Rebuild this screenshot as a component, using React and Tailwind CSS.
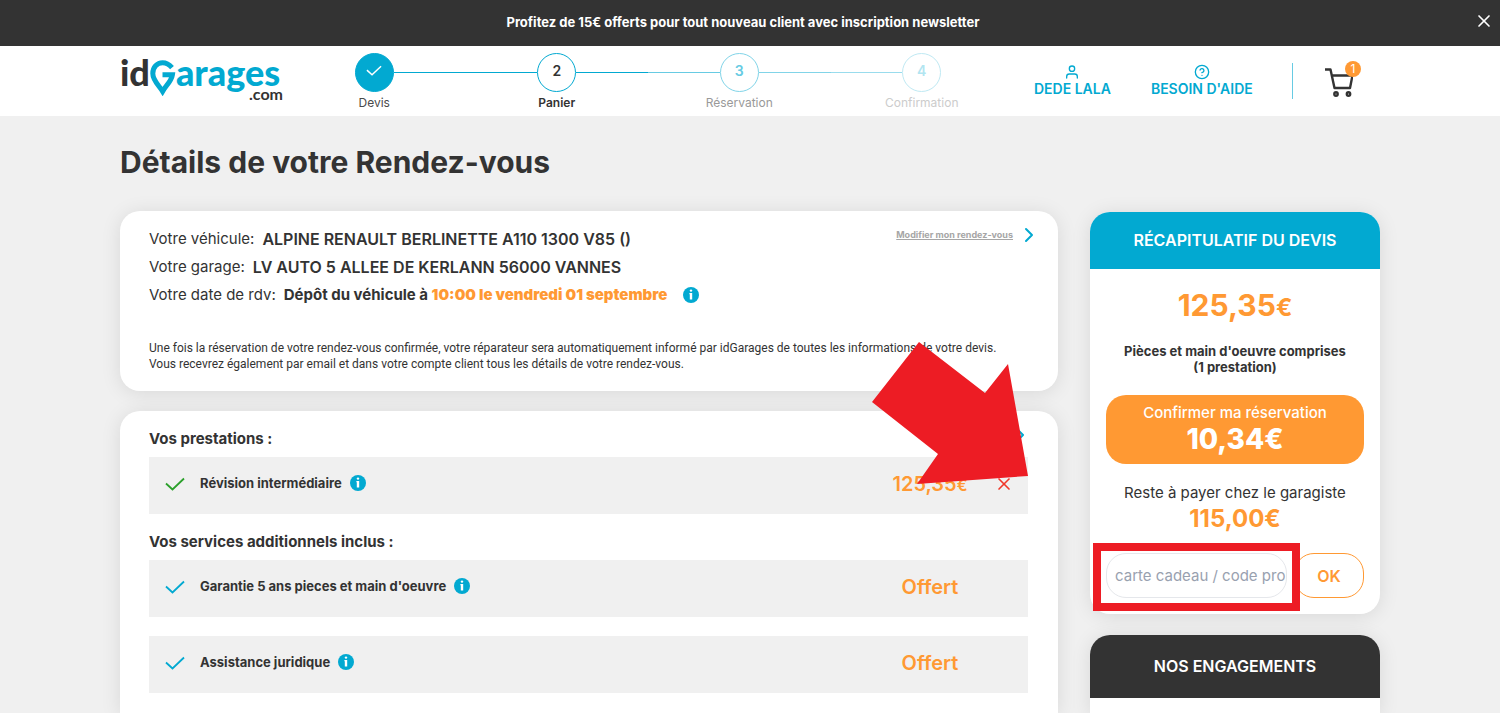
import React, { useState } from 'react';
import { FiUser, FiHelpCircle, FiChevronRight, FiX } from 'react-icons/fi';

const steps = [
  { id: 1, label: 'Devis', done: true, circle: 'border-[#02a9d1] bg-[#02a9d1] text-white', text: 'text-[#4a4a4a]', left: 'bg-transparent', right: 'bg-[#02a9d1]' },
  { id: 2, label: 'Panier', circle: 'border-[#02a9d1] bg-white text-[#333333]', text: 'font-semibold text-[#333333]', left: 'bg-[#02a9d1]', right: 'bg-[#02a9d1]' },
  { id: 3, label: 'Réservation', circle: 'border-[#81d4e8] bg-white text-[#67cbe3]', text: 'text-[#999999]', left: 'bg-[#67cbe3]', right: 'bg-[#81d4e8]' },
  { id: 4, label: 'Confirmation', circle: 'border-[#bfe9f3] bg-white text-[#b2e5f1]', text: 'text-[#cccccc]', left: 'bg-[#99dced]', right: 'bg-transparent' },
];

const services = [
  { name: "Garantie 5 ans pieces et main d'oeuvre", price: 'Offert' },
  { name: 'Assistance juridique', price: 'Offert' },
];

function Check({ className }) {
  return (
    <svg viewBox="0 0 20 14" className={className} fill="none" stroke="currentColor" strokeWidth="1.8">
      <path d="M1 6.5 L7.5 12.5 L19 1.5" />
    </svg>
  );
}

function InfoButton() {
  return (
    <button type="button" aria-label="Plus d'informations" className="shrink-0">
      <svg viewBox="0 0 16 16" className="size-4">
        <circle cx="8" cy="8" r="8" fill="#02a9d1" />
        <circle cx="8" cy="3.6" r="1.2" fill="#ffffff" />
        <path d="M6.4 6h2.8v6.6H6.8V7.2h-.4z" fill="#ffffff" />
      </svg>
    </button>
  );
}

function Logo() {
  return (
    <a href="#" aria-label="idGarages.com" className="flex w-[163px] flex-col font-['Lato',sans-serif] font-black">
      <span className="flex items-start text-4xl leading-9 text-[#02a9d1]">
        <span className="text-[#333333]">id</span>
        <svg viewBox="0 0 26 36" className="mt-[6px] h-9 w-[26px]" fill="none" stroke="currentColor" strokeWidth="5">
          <path d="M22 7.6 C18.5 3.6 15.5 2.8 12.6 2.8 C7 2.8 2.8 7.2 2.8 13.5 C2.8 20.5 9 25.5 12.6 31.4 C16 25.5 21.5 21 22.4 14.8 H12.5" />
        </svg>
        <span>arages</span>
      </span>
      <span className="-mt-2.5 self-end text-base leading-4 font-bold text-[#333333]">.com</span>
    </a>
  );
}

function ServiceRow({ name, price, color, children }) {
  return (
    <div className="flex h-[57px] items-center bg-[#f0f0f0] pb-1 pl-4">
      <Check className={`h-[14px] w-5 shrink-0 ${color}`} />
      <span className="ml-[15px] text-[13px] font-bold">{name}</span>
      <span className="ml-2 flex pb-0.5"><InfoButton /></span>
      <span className="ml-auto w-[100px] text-center text-xl font-semibold text-[#ff9933]">{price}</span>
      <span className="flex w-12 justify-center">{children}</span>
    </div>
  );
}

export default function App() {
  const [showBanner, setShowBanner] = useState(true);
  const [code, setCode] = useState('');

  return (
    <div className="flex min-h-screen flex-col bg-[#f0f0f0] font-['Inter',sans-serif] text-[#333333]">
      {showBanner && (
        <div className="flex h-[46px] items-center bg-[#333333] text-white">
          <p className="flex-1 pl-3 text-center text-[13px] font-bold">
            Profitez de 15€ offerts pour tout nouveau client avec inscription newsletter
          </p>
          <button type="button" aria-label="Fermer" onClick={() => setShowBanner(false)} className="mr-1.5 pb-1">
            <FiX className="size-5" />
          </button>
        </div>
      )}

      <header className="bg-white">
        <div className="mx-auto flex h-[70px] max-w-[1260px] items-start">
          <div className="pt-2"><Logo /></div>

          <ol className="grid w-[730px] grid-cols-4 pt-[7px]">
            {steps.map((step) => (
              <li key={step.id} className="flex flex-col items-center">
                <div className="flex w-full items-center">
                  <span className={`h-px flex-1 ${step.left}`} />
                  <span className={`flex size-[39px] items-center justify-center rounded-full border pb-1 text-sm font-semibold ${step.circle}`}>
                    {step.done ? <Check className="h-[11px] w-4" /> : step.id}
                  </span>
                  <span className={`h-px flex-1 ${step.right}`} />
                </div>
                <span className={`mt-[3px] text-xs leading-4 ${step.text}`}>{step.label}</span>
              </li>
            ))}
          </ol>

          <nav className="ml-[21px] flex items-start gap-10 pt-[18px] text-sm leading-4 font-semibold text-[#02a9d1]">
            <a href="#" className="flex flex-col items-center gap-px">
              <FiUser className="size-4" />
              DEDE LALA
            </a>
            <a href="#" className="flex flex-col items-center gap-px">
              <FiHelpCircle className="size-4" />
              BESOIN D'AIDE
            </a>
          </nav>

          <a href="#" aria-label="Panier" className="mt-[17px] ml-auto flex h-9 items-start border-l border-[#67cbe3] pr-[27px] pl-8">
            <span className="relative block">
              <svg viewBox="0 0 28 30" className="mt-1 h-[30px] w-7" fill="none" stroke="#333333" strokeWidth="2.4" strokeLinejoin="round">
                <path d="M0 2.5h5.5l4 18.5h15.5l2.5-12.5H7" />
                <circle cx="11" cy="27" r="1.7" />
                <circle cx="23.5" cy="27" r="1.7" />
              </svg>
              <span className="absolute -top-0.5 -right-2 flex size-4 items-center justify-center rounded-full bg-[#ff9933] text-xs text-white">1</span>
            </span>
          </a>
        </div>
      </header>

      <main className="mx-auto flex w-full max-w-[1260px] flex-1 flex-col">
        <h1 className="mt-6 text-3xl leading-[44px] font-bold">Détails de votre Rendez-vous</h1>

        <div className="mt-[27px] flex flex-1 gap-8">
          <div className="relative flex flex-1 flex-col gap-5">
            <section className="rounded-[20px] bg-white px-[29px] pt-[14px] pb-[19px] shadow-[0_2px_20px_rgba(0,0,0,0.1)]">
              <div className="flex justify-between">
                <div className="text-[15px]">
                  <p className="flex h-7 items-center gap-2">
                    Votre véhicule: <strong className="text-base font-semibold">ALPINE RENAULT BERLINETTE A110 1300 V85 ()</strong>
                  </p>
                  <p className="flex h-7 items-center gap-2">
                    Votre garage: <strong className="text-base font-semibold">LV AUTO 5 ALLEE DE KERLANN 56000 VANNES</strong>
                  </p>
                  <p className="flex h-7 items-center gap-2">
                    Votre date de rdv:{' '}
                    <strong className="font-bold">
                      Dépôt du véhicule à <b className="font-black text-[#ff9933]">10:00 le vendredi 01 septembre</b>
                    </strong>
                    <span className="ml-2 flex"><InfoButton /></span>
                  </p>
                </div>
                <a href="#" className="-mr-3 flex h-5 items-center gap-1 text-[9px] font-bold text-[#a6a6a6]">
                  <span className="underline">Modifier mon rendez-vous</span>
                  <FiChevronRight className="size-6 text-[#02a9d1]" />
                </a>
              </div>
              <p className="mt-[31px] font-['Roboto',sans-serif] text-xs leading-4">
                Une fois la réservation de votre rendez-vous confirmée, votre réparateur sera automatiquement informé par idGarages de toutes les informations de votre devis.
                <br />
                Vous recevrez également par email et dans votre compte client tous les détails de votre rendez-vous.
              </p>
            </section>

            <section className="flex-1 rounded-t-[20px] bg-white pt-4 pr-[30px] pl-[29px] shadow-[0_2px_20px_rgba(0,0,0,0.1)]">
              <div className="mb-[6px] flex h-6 items-start justify-between">
                <h2 className="text-[15px] leading-6 font-bold">Vos prestations :</h2>
                <FiChevronRight className="-mt-1 -mr-1 size-6 text-[#02a9d1]" />
              </div>
              <ServiceRow name="Révision intermédiaire" price={<>125,35<span className="text-base">€</span></>} color="text-[#2ba02b]">
                <button type="button" aria-label="Supprimer">
                  <FiX className="size-5 text-[#f0382a]" />
                </button>
              </ServiceRow>
              <h2 className="mt-4 mb-[6px] text-[15px] leading-6 font-bold">Vos services additionnels inclus :</h2>
              <div className="flex flex-col gap-[19px]">
                {services.map((s) => (
                  <ServiceRow key={s.name} name={s.name} price={s.price} color="text-[#02a9d1]" />
                ))}
              </div>
            </section>

            <svg viewBox="0 0 156 143" className="pointer-events-none absolute top-[131px] right-[30px] h-[143px] w-[156px]" fill="#ed1c24">
              <path d="M47 0 L113 51 L136 22 L156 134 L45 142 L66 112 L0 60 Z" />
            </svg>
          </div>

          <aside className="flex w-[290px] flex-col gap-[21px] pt-px text-center">
            <section className="rounded-[20px] bg-white shadow-[0_2px_20px_rgba(0,0,0,0.1)]">
              <h2 className="rounded-t-[20px] bg-[#02a9d1] text-base leading-[57px] font-semibold text-white">RÉCAPITULATIF DU DEVIS</h2>
              <div className="px-4 pb-4">
                <p className="pt-[18px] text-3xl leading-9 font-bold text-[#ff9933]">125,35<span className="text-2xl">€</span></p>
                <p className="mt-[19px] text-[13px] leading-4 font-bold">
                  Pièces et main d'oeuvre comprises
                  <br />
                  (1 prestation)
                </p>
                <button type="button" className="mt-5 h-[69px] w-full rounded-[20px] bg-[#ff9933] pb-1.5 text-white">
                  <span className="block text-[15px] leading-6 font-medium">Confirmer ma réservation</span>
                  <span className="block text-[28px] leading-7 font-extrabold">10,34€</span>
                </button>
                <p className="mt-[17px] text-[15px] leading-6">Reste à payer chez le garagiste</p>
                <p className="text-2xl leading-7 font-bold text-[#ff9933]">115,00€</p>
                <form className="mt-5 flex justify-between" onSubmit={(e) => e.preventDefault()}>
                  <div className="relative">
                    <input
                      type="text"
                      aria-label="carte cadeau / code promo"
                      placeholder="carte cadeau / code promo"
                      value={code}
                      onChange={(e) => setCode(e.target.value)}
                      className="h-[45px] w-[181px] rounded-[20px] border border-gray-200 pl-2 text-[15px] placeholder:text-gray-400"
                    />
                    <span className="pointer-events-none absolute -inset-x-[13px] -top-[10px] -bottom-[13px] z-10 border-8 border-[#ed1c24]" />
                  </div>
                  <button type="submit" className="h-[45px] w-[70px] rounded-[20px] border border-[#ff9933] text-base font-semibold text-[#ff9933]">OK</button>
                </form>
              </div>
            </section>

            <section className="flex-1 rounded-t-[20px] bg-white shadow-[0_2px_20px_rgba(0,0,0,0.1)]">
              <h2 className="rounded-t-[20px] bg-[#333333] text-base leading-[63px] font-semibold text-white">NOS ENGAGEMENTS</h2>
            </section>
          </aside>
        </div>
      </main>
    </div>
  );
}
